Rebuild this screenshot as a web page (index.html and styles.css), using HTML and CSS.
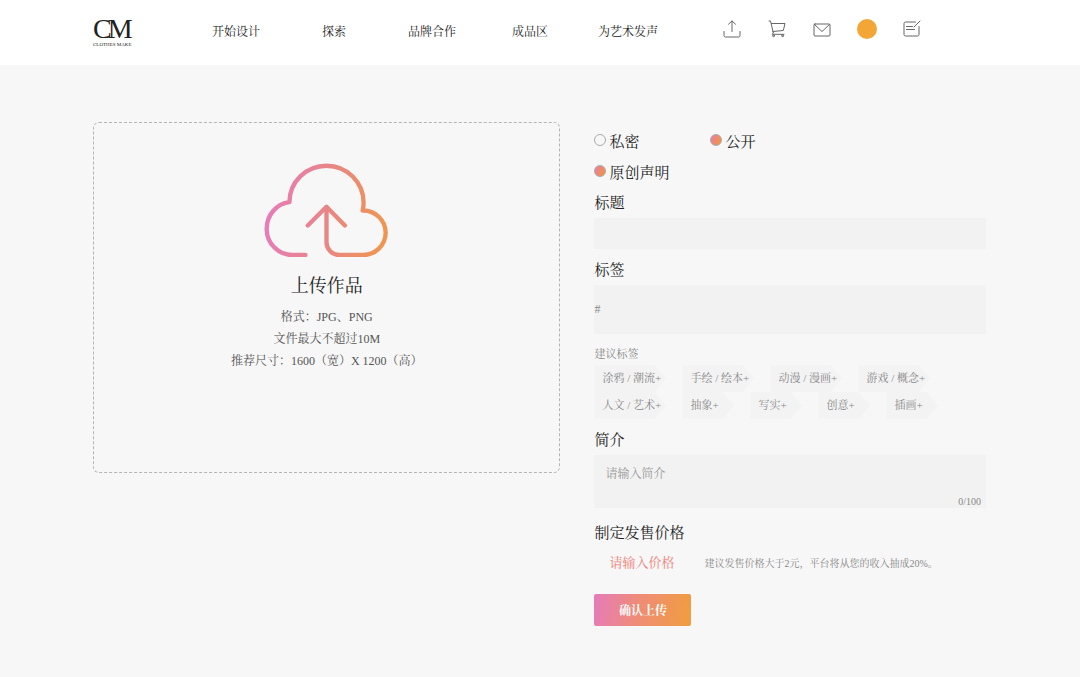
FILE: index.html
```html
<!DOCTYPE html>
<html lang="zh-CN">
<head>
<meta charset="utf-8">
<meta name="viewport" content="width=device-width, initial-scale=1">
<title>上传作品 - Clothes Make</title>
<link rel="stylesheet" href="styles.css">
</head>
<body>
<header class="header">
  <a class="logo" href="#">
    <span class="logo-mark">C<span class="logo-m">M</span></span>
    <span class="logo-name">CLOTHES MAKE</span>
  </a>
  <nav class="nav">
    <a href="#">开始设计</a>
    <a href="#">探索</a>
    <a href="#">品牌合作</a>
    <a href="#">成品区</a>
    <a href="#">为艺术发声</a>
  </nav>
  <div class="tools">
    <a href="#" aria-label="上传"><svg class="icon" viewBox="0 0 18 18"><path d="M1 11.500V15.500Q1 17 2.500 17H15.500Q17 17 17 15.500V11.500M9 11.500V1M5.500 4.200 9 1 12.500 4.200"/></svg></a>
    <a href="#" aria-label="购物车"><svg class="icon" viewBox="0 0 18 18"><path d="M1 1H2.500L5.300 12.500M3.500 3.500H17L15.300 10.500 4.800 11.500M5.300 12.500 4.300 14.300H16"/><circle cx="5.500" cy="15.800" r=".9"/><circle cx="14.500" cy="15.800" r=".9"/></svg></a>
    <a href="#" aria-label="消息"><svg class="icon" viewBox="0 0 18 18"><rect x="1" y="4" width="16" height="12" rx="1"/><path d="M1.500 4.500 9 11.500 16.500 4.500"/></svg></a>
    <a href="#" aria-label="我的"><span class="avatar"></span></a>
    <a href="#" aria-label="投稿"><svg class="icon" viewBox="0 0 18 18"><path d="M12.500 2H2.500Q1 2 1 3.500V14.500Q1 16 2.500 16H14.500Q16 16 16 14.500V6.500M17 1 11 7M3.500 6.500H9.500M3.500 9.500H11.500"/></svg></a>
  </div>
</header>
<main class="page">
  <button class="upload" type="button">
    <svg class="cloud" viewBox="130 35 380 290">
      <defs>
        <linearGradient id="cloud-stroke" gradientUnits="userSpaceOnUse" x1="141" y1="180" x2="497" y2="220">
          <stop offset="0" stop-color="#e77cb9"/>
          <stop offset=".5" stop-color="#e88686"/>
          <stop offset="1" stop-color="#f09550"/>
        </linearGradient>
      </defs>
      <path d="M257 313H218A77 78 0 0 1 141 235A77 80 0 0 1 209 155A111 109 0 0 1 320 46A111 111 0 0 1 431 157Q431 169 428 180A67 67 0 0 1 497 246A67 67 0 0 1 430 313H358A38 38 0 0 1 320 275V170M264 225 320 169 375 225"/>
    </svg>
    <span class="upload-title">上传作品</span>
    <span class="upload-hint">格式：JPG、PNG</span>
    <span class="upload-hint">文件最大不超过10M</span>
    <span class="upload-hint">推荐尺寸：1600（宽）X 1200（高）</span>
  </button>
  <form class="form">
    <div class="choices">
      <label class="choice"><input type="radio" name="visibility">私密</label>
      <label class="choice"><input type="radio" name="visibility" checked>公开</label>
      <label class="choice"><input type="checkbox" checked>原创声明</label>
    </div>
    <label class="label" for="title">标题</label>
    <input class="field" id="title" type="text">
    <label class="label spaced" for="tags">标签</label>
    <input class="field tags" id="tags" type="text" value="#">
    <p class="suggest">建议标签</p>
    <div class="chips">
      <button class="chip wide" type="button">涂鸦 / 潮流+</button>
      <button class="chip wide" type="button">手绘 / 绘本+</button>
      <button class="chip wide" type="button">动漫 / 漫画+</button>
      <button class="chip wide" type="button">游戏 / 概念+</button>
      <button class="chip wide" type="button">人文 / 艺术+</button>
      <button class="chip" type="button">抽象+</button>
      <button class="chip" type="button">写实+</button>
      <button class="chip" type="button">创意+</button>
      <button class="chip" type="button">插画+</button>
    </div>
    <label class="label spaced" for="intro">简介</label>
    <div class="intro">
      <textarea id="intro" maxlength="100" placeholder="请输入简介"></textarea>
      <span class="count">0/100</span>
    </div>
    <label class="label price-label" for="price">制定发售价格</label>
    <div class="price-row">
      <input class="price" id="price" type="text" placeholder="请输入价格">
      <span class="note">建议发售价格大于2元，平台将从您的收入抽成20%。</span>
    </div>
    <button class="submit" type="submit">确认上传</button>
  </form>
</main>
</body>
</html>
```
FILE: styles.css
```css
* {
  box-sizing: border-box;
}

body {
  margin: 0;
  min-height: 100vh;
  background: #f7f7f7;
  color: #222;
  font-family: "Liberation Serif", "Songti SC", "Noto Serif CJK SC", "Noto Sans CJK SC", serif;
  font-size: 12px;
}

a {
  color: inherit;
  text-decoration: none;
}

button,
input,
textarea {
  margin: 0;
  padding: 0;
  border: 0;
  background: none;
  color: inherit;
  font: inherit;
  outline: none;
}

button {
  cursor: pointer;
}

.header {
  display: flex;
  align-items: center;
  height: 65px;
  padding: 0 93px 2px;
  background: #fff;
}

.logo {
  display: flex;
  flex-direction: column;
  width: 94px;
  color: #222;
}

.logo-mark {
  font-size: 28px;
  line-height: 26px;
}

.logo-m {
  margin-left: -4px;
}

.logo-name {
  font-size: 5px;
  line-height: 6px;
}

.nav {
  display: grid;
  grid-template-columns: repeat(5, 98px);
  text-align: center;
  line-height: 20px;
}

.tools {
  display: grid;
  grid-template-columns: repeat(5, 45px);
  align-items: center;
  justify-items: center;
  margin-left: 32px;
  padding-bottom: 5px;
}

.tools a {
  display: flex;
}

.icon {
  width: 18px;
  height: 18px;
  fill: none;
  stroke: #666;
  stroke-width: 1;
  stroke-linecap: round;
  stroke-linejoin: round;
}

.avatar {
  width: 20px;
  height: 20px;
  border-radius: 50%;
  background: #f3a536;
}

.page {
  display: grid;
  grid-template-columns: 468fr 392fr;
  align-items: start;
  gap: 34px;
  padding: 57px 94px 50px 93px;
}

.upload {
  display: flex;
  flex-direction: column;
  align-items: center;
  min-height: 351px;
  padding: 39px 0;
  border: 1px dashed #b4b4b4;
  border-radius: 6px;
}

.cloud {
  width: 127px;
  height: 97px;
  fill: none;
  stroke: url(#cloud-stroke);
  stroke-width: 13;
  stroke-linecap: round;
  stroke-linejoin: round;
}

.upload-title {
  margin: 12px 0 5px;
  font-size: 18px;
  line-height: 30px;
}

.upload-hint {
  color: #555;
  line-height: 22px;
}

.form {
  padding-top: 3px;
}

.choices {
  display: grid;
  grid-template-columns: 116px 1fr;
}

.choice {
  display: flex;
  align-items: center;
  gap: 3px;
  height: 31px;
  font-size: 15px;
}

.choice input {
  appearance: none;
  width: 12px;
  height: 12px;
  margin-bottom: 2px;
  border: 1px solid #aaa;
  border-radius: 50%;
}

.choice input:checked {
  background: linear-gradient(115deg, #e67bb5, #f39245 80%) border-box;
}

.label {
  display: block;
  padding-top: 1px;
  font-size: 15px;
  line-height: 30px;
}

.spaced {
  margin-top: 5px;
}

.field {
  display: block;
  width: 100%;
  height: 31px;
  background: #f2f2f2;
}

.tags {
  height: 49px;
  color: #888;
}

.suggest {
  margin: 10px 0 1px;
  color: #888;
  font-size: 11px;
  line-height: 20px;
}

.chips {
  display: flex;
  flex-wrap: wrap;
  column-gap: 16px;
}

.chip {
  position: relative;
  z-index: 0;
  width: 52px;
  height: 27px;
  padding: 0 0 4px 8px;
  color: #888;
  font-size: 11px;
  text-align: left;
  white-space: nowrap;
}

.chip::before {
  content: "";
  position: absolute;
  inset: 0;
  z-index: -1;
  background: #f3f3f3;
  clip-path: polygon(0 0, calc(100% - 12px) 0, 100% 50%, calc(100% - 12px) 100%, 0 100%);
}

.wide {
  width: 72px;
}

.intro {
  position: relative;
  background: #f2f2f2;
}

.intro textarea {
  display: block;
  width: 100%;
  height: 53px;
  padding: 10px 11px;
  line-height: 18px;
  resize: none;
}

.intro ::placeholder {
  color: #999;
}

.count {
  position: absolute;
  right: 5px;
  bottom: 1px;
  color: #888;
  font-size: 10px;
}

.price-label {
  margin-top: 9px;
}

.price-row {
  display: flex;
  align-items: center;
  height: 30px;
}

.price {
  width: 110px;
  padding-left: 15px;
  font-size: 13px;
}

.price::placeholder {
  color: #f08078;
}

.note {
  padding-bottom: 2px;
  color: #888;
  font-size: 10px;
}

.submit {
  width: 97px;
  height: 32px;
  margin-top: 16px;
  border-radius: 2px;
  background: linear-gradient(100deg, #e57bbb, #ef8c78 45%, #f19d3d);
  color: #fff;
  font-weight: bold;
}
```
